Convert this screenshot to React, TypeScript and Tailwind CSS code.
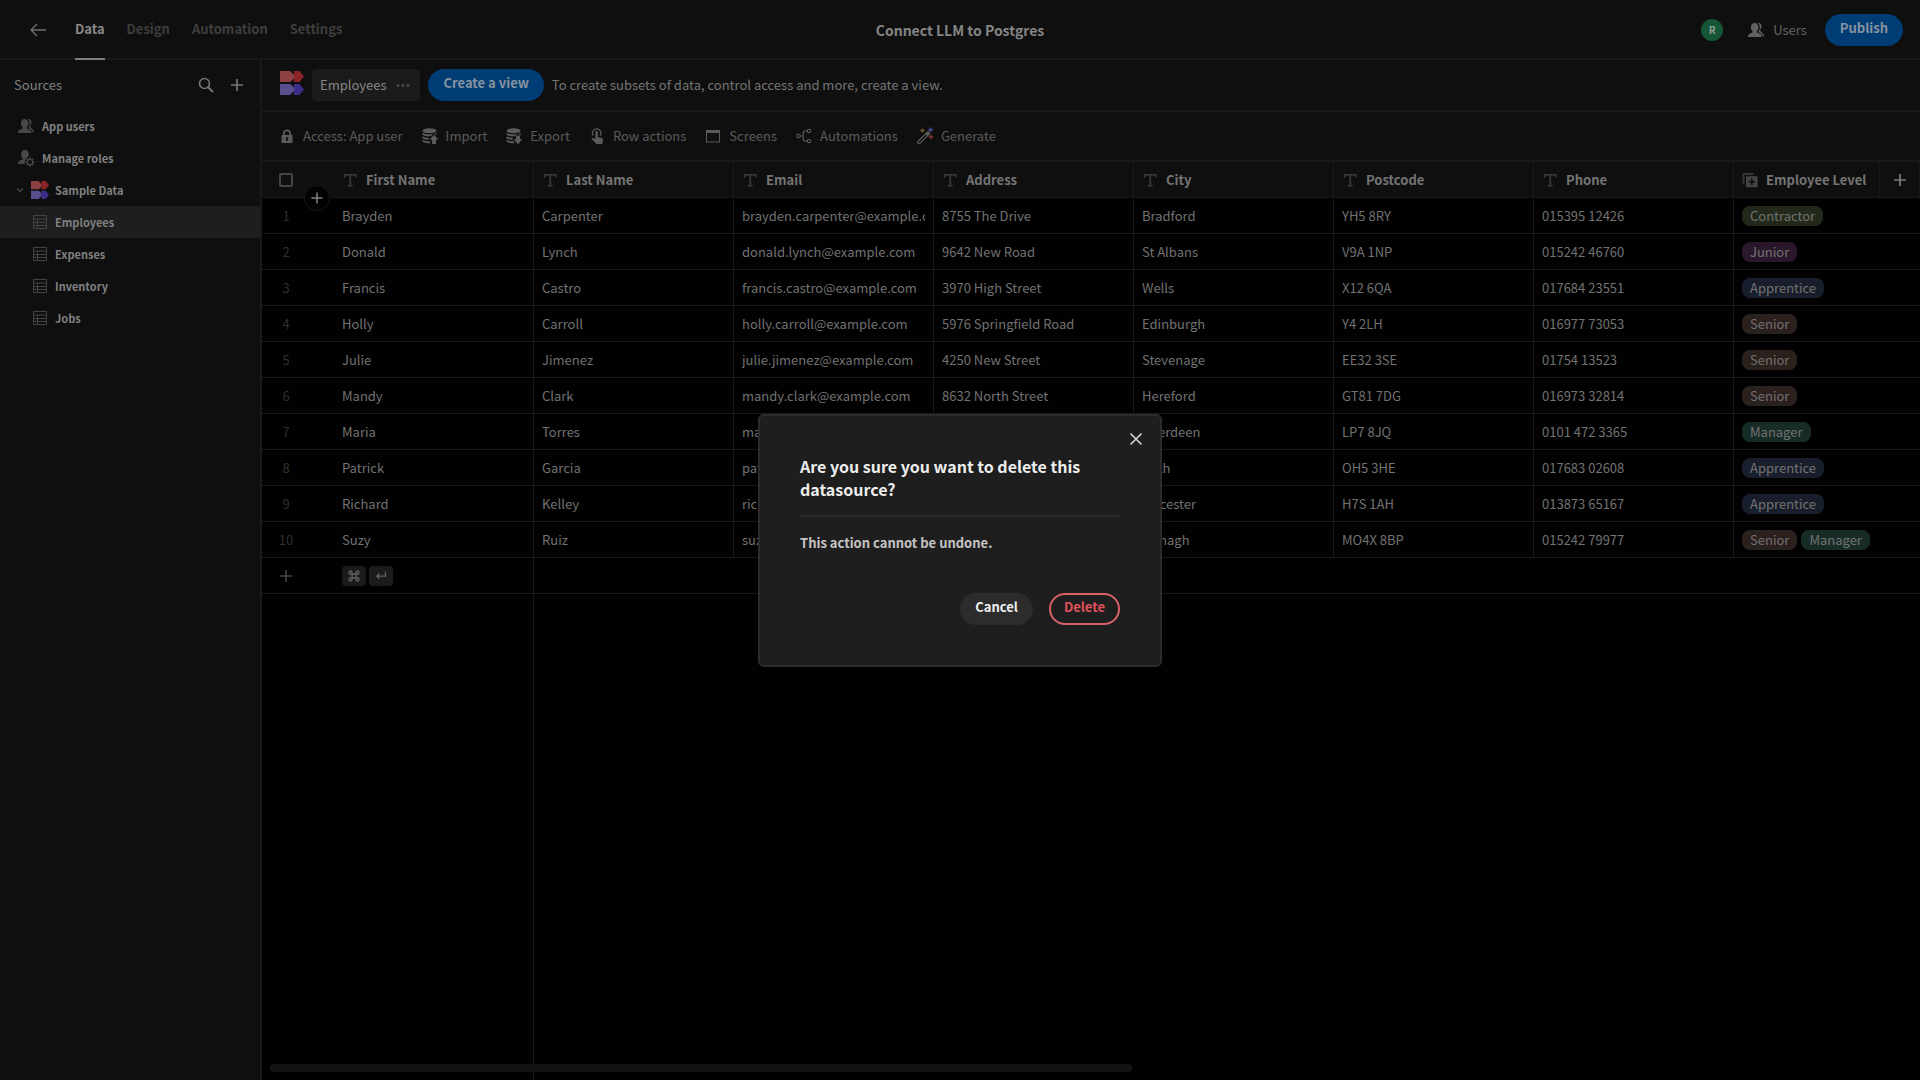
import type { ReactNode } from "react";

type IconProps = { children: ReactNode; className?: string };

function Icon({ children, className = "" }: IconProps) {
  return (
    <svg viewBox="0 0 18 18" width="18" height="18" fill="currentColor" aria-hidden="true" className={`shrink-0 ${className}`}>
      {children}
    </svg>
  );
}

const ArrowLeft = () => (
  <Icon>
    <path d="M17 9H2.500M8 3L2 9l6 6" fill="none" stroke="currentColor" strokeWidth="1.300" />
  </Icon>
);

const People = () => (
  <Icon>
    <path d="M7.600 2C10 2 11.500 3.800 11.500 6.200c0 1.600-.7 2.900-1.600 3.700v1c0 .5.300.8.8 1 2.500.7 3.900 1.700 3.900 3.300v.8H1v-.8c0-1.600 1.200-2.600 3.700-3.300.5-.2.8-.5.8-1v-1c-.9-.8-1.600-2.100-1.600-3.700C3.900 3.800 5.300 2 7.600 2z" />
    <path d="M10.500 1.700c2.300-.4 4 1.200 4 3.600 0 1.500-.6 2.700-1.400 3.500v.8l4 4.600v1h-1.500c-.2-1.700-1.700-3-4.100-3.900v-.9c.8-1 1.300-2.400 1.300-3.900 0-2.100-.8-3.800-2.300-4.800z" />
  </Icon>
);

const PersonGear = () => (
  <Icon>
    <path d="M8 1c2.300 0 3.900 1.700 3.900 4 0 1.600-.6 2.700-1.500 3.500-1.600.8-2.600 2.400-2.600 4.200 0 .8.200 1.500.5 2.300H1v-1c0-1.500 1.200-2.400 3.500-3 .5-.2.900-.5.900-1v-1C4.500 8.200 4 6.800 4 5.200 4 2.800 5.700 1 8 1z" />
    <circle cx="13" cy="13" r="2.700" fill="none" stroke="currentColor" strokeWidth="1.300" />
    <path d="M13 8.300v1.600M13 16.100v1.600M8.300 13h1.600M16.100 13h1.600M9.700 9.700l1.100 1.100M15.200 15.200l1.100 1.100M16.300 9.700l-1.100 1.100M10.800 15.200l-1.100 1.100" stroke="currentColor" strokeWidth="1.500" />
  </Icon>
);

const Search = () => (
  <Icon>
    <circle cx="7.500" cy="7.500" r="5" fill="none" stroke="currentColor" strokeWidth="1.600" />
    <path d="M11.200 11.200L15.500 15.500" stroke="currentColor" strokeWidth="2" strokeLinecap="round" />
  </Icon>
);

const Plus = ({ className = "" }: { className?: string }) => (
  <Icon className={className}>
    <path d="M9 3v12M3 9h12" stroke="currentColor" strokeWidth="1.700" />
  </Icon>
);

const Table = () => (
  <Icon>
    <path d="M2.500 2.500h13v13h-13zM2.500 6h13M2.500 9.500h13M2.500 12.500h13M6.500 6v9.500" fill="none" stroke="currentColor" />
  </Icon>
);

const Lock = () => (
  <Icon>
    <path fillRule="evenodd" d="M14 8h-1V6.500a4 4 0 0 0-8 0V8H4a.5.500 0 0 0-.5.500v7a.5.500 0 0 0 .5.500h10a.5.500 0 0 0 .5-.5v-7A.5.500 0 0 0 14 8zM6.700 6.500a2.300 2.300 0 0 1 4.600 0V8H6.700zM9.800 12.200V14H8.200v-1.800a1.200 1.200 0 1 1 1.600 0z" />
  </Icon>
);

/* Stacked data discs, shared by the import and export icons */
const Discs = () => (
  <>
    <ellipse cx="8.500" cy="3.800" rx="7" ry="2.500" />
    <path d="M1.500 5.500c1 1.300 3.800 1.900 7 1.900 1.300 0 2.600-.1 3.700-.4L9.800 9.300c-3.700.2-7.300-.5-8.300-1.900zM13.500 6.600c1-.3 1.700-.7 2-1.100v2.800zM1.500 9c1 1.300 3.500 1.900 6.700 1.900L7 12.700c-2.800-.1-5-.8-5.500-1.800zM1.500 12.500c.8 1 2.900 1.600 5.500 1.700h2v2c-3.900.1-7.500-.8-7.500-2.200z" />
  </>
);

const Import = () => (
  <Icon>
    <Discs />
    <path d="M13 7.700l4.500 5H15V17h-4v-4.300H8.500z" />
  </Icon>
);

const Export = () => (
  <Icon>
    <Discs />
    <path d="M11 8.500h4v3.800h2.500l-4.500 5-4.500-5H11z" />
  </Icon>
);

const Tap = () => (
  <Icon>
    <path d="M5.300 8.700a4.200 4.200 0 1 1 6.700 0" fill="none" stroke="currentColor" strokeWidth="1.200" />
    <path d="M7.400 5.300a1.250 1.250 0 0 1 2.500 0v5l4 .8c.8.200 1.200.7 1.100 1.500l-.5 2.800V17H7.800v-1l-4-3.700c-.9-1 .3-2 1.300-1.400l2.300 1.200z" />
  </Icon>
);

const Screen = () => (
  <Icon>
    <path fillRule="evenodd" d="M2 3h14v12.500H2zM3 6v8.500h12V6z" />
  </Icon>
);

const Branch = () => (
  <Icon>
    <g fill="none" stroke="currentColor" strokeWidth="1.100">
      <circle cx="3.500" cy="9" r="1.700" />
      <circle cx="14" cy="4" r="1.700" />
      <circle cx="14" cy="14" r="1.700" />
      <path d="M5.200 9h3M12.300 4H10.200Q8.200 4 8.200 6v6q0 2 2 2h2.100" />
    </g>
  </Icon>
);

const Wand = () => (
  <Icon>
    <path d="M3.200 15.200L12 6.400" stroke="currentColor" strokeWidth="4" strokeLinecap="round" />
    <path d="M3.200 15.200L9.800 8.600" stroke="#0f0f0f" strokeWidth="1.500" strokeLinecap="round" />
    <path d="M6.500 1.500v4M4.500 3.500h4" stroke="#75602a" strokeWidth="1.300" />
    <path d="M14.500 .5v4.500M12.300 2.700h4.500" stroke="#4b4b93" strokeWidth="1.500" />
    <path d="M15 7.500v4.500M12.800 9.700h4.500" stroke="#84302f" strokeWidth="1.500" />
  </Icon>
);

const TextType = () => (
  <Icon>
    <path d="M3 3h12.500v3.500h-1.100l-.6-2h-3.700v9.700l2 .4v1H6.400v-1l2-.4V4.500H4.700l-.6 2H3z" />
  </Icon>
);

const MultiType = () => (
  <Icon>
    <path d="M1.500 2h11v2H3.500v8.500h-2z" opacity=".7" />
    <path fillRule="evenodd" d="M5 5.200h11.500v11H5zM10 7.500v2.400H7.600v1.700H10V14h1.700v-2.400h2.400V9.900h-2.400V7.500z" />
  </Icon>
);

function Logo({ className }: { className: string }) {
  return (
    <svg viewBox="0 0 24 24" aria-hidden="true" className={`shrink-0 ${className}`}>
      <path d="M0 0h10l4 4v3.500L10.500 11H0z" fill="#8e4144" />
      <path d="M14 0h5.500L24 5.500 19.500 11H14z" fill="#8b2529" />
      <path d="M0 13h10.500l3.500 3.500V20l-4 4H0z" fill="#584f8c" />
      <path d="M14 13h5.500l4.500 5.500-4.500 5.500H14z" fill="#3b2f8b" />
    </svg>
  );
}

const columns = ["First Name", "Last Name", "Email", "Address", "City", "Postcode", "Phone"];

const employees = [
  ["Brayden", "Carpenter", "brayden.carpenter@example.com", "8755 The Drive", "Bradford", "YH5 8RY", "015395 12426", "Contractor"],
  ["Donald", "Lynch", "donald.lynch@example.com", "9642 New Road", "St Albans", "V9A 1NP", "015242 46760", "Junior"],
  ["Francis", "Castro", "francis.castro@example.com", "3970 High Street", "Wells", "X12 6QA", "017684 23551", "Apprentice"],
  ["Holly", "Carroll", "holly.carroll@example.com", "5976 Springfield Road", "Edinburgh", "Y4 2LH", "016977 73053", "Senior"],
  ["Julie", "Jimenez", "julie.jimenez@example.com", "4250 New Street", "Stevenage", "EE32 3SE", "01754 13523", "Senior"],
  ["Mandy", "Clark", "mandy.clark@example.com", "8632 North Street", "Hereford", "GT81 7DG", "016973 32814", "Senior"],
  ["Maria", "Torres", "maria.torres@example.com", "2841 Mill Lane", "Aberdeen", "LP7 8JQ", "0101 472 3365", "Manager"],
  ["Patrick", "Garcia", "patrick.garcia@example.com", "7316 Church Road", "Bath", "OH5 3HE", "017683 02608", "Apprentice"],
  ["Richard", "Kelley", "richard.kelley@example.com", "1094 Park Road", "Leicester", "H7S 1AH", "013873 65167", "Apprentice"],
  ["Suzy", "Ruiz", "suzy.ruiz@example.com", "6420 Station Road", "Armagh", "MO4X 8BP", "015242 79977", "Senior,Manager"],
];

const tagColors: Record<string, string> = {
  Contractor: "bg-[#23291a]",
  Junior: "bg-[#2a172b]",
  Apprentice: "bg-[#191e2c]",
  Senior: "bg-[#2a201c]",
  Manager: "bg-[#182c27]",
};

const tools = [
  { label: "Access: App user", icon: <Lock /> },
  { label: "Import", icon: <Import /> },
  { label: "Export", icon: <Export /> },
  { label: "Row actions", icon: <Tap /> },
  { label: "Screens", icon: <Screen /> },
  { label: "Automations", icon: <Branch /> },
  { label: "Generate", icon: <Wand /> },
];

function TopBar() {
  return (
    <header className="grid h-[60px] shrink-0 grid-cols-3 items-center border-b-2 border-[#191919] bg-[#0f0f0f]">
      <div className="flex h-[60px] items-center gap-7 pl-[29px] font-bold text-[#3e3e3e]">
        <button aria-label="Back" className="text-[#6f6f6f]"><ArrowLeft /></button>
        <nav className="flex h-full items-center gap-[22px]">
          <a href="#data" className="flex h-full items-center border-b-2 border-[#7e7e7e] text-[#8a8a8a]">Data</a>
          <a href="#design" className="pb-[2px]">Design</a>
          <a href="#automation" className="pb-[2px]">Automation</a>
          <a href="#settings" className="pb-[2px]">Settings</a>
        </nav>
      </div>
      <h1 className="text-center text-[14px] font-bold text-[#858585]">Connect LLM to Postgres</h1>
      <div className="flex items-center justify-end pr-[17px]">
        <span className="flex size-[22px] items-center justify-center rounded-full bg-[#145637] text-[10px] font-bold text-[#8f9f97]">R</span>
        <button className="ml-6 flex items-center gap-2 text-[#626262]"><People />Users</button>
        <button className="ml-[18px] h-8 rounded-full bg-[#003d74] px-[15px] pb-1 font-bold text-[#8793a0]">Publish</button>
      </div>
    </header>
  );
}

function Sidebar() {
  return (
    <aside className="flex w-[262px] shrink-0 flex-col border-r-2 border-[#191919] bg-[#0f0f0f]">
      <div className="flex h-[50px] items-center pr-[14px] pl-[14px] text-[#757575]">
        <h2 className="flex-1 text-[#808080]">Sources</h2>
        <button aria-label="Search" className="mr-[13px]"><Search /></button>
        <button aria-label="Add source"><Plus /></button>
      </div>
      <nav className="text-[11px] font-bold text-[#808080]">
        <a href="#users" className="flex h-8 items-center gap-[7px] pl-[17px]"><span className="text-[#474747]"><People /></span>App users</a>
        <a href="#roles" className="flex h-8 items-center gap-[7px] pl-[17px]"><span className="text-[#474747]"><PersonGear /></span>Manage roles</a>
        <a href="#sample" className="flex h-8 items-center gap-[6px] pl-4">
          <svg viewBox="0 0 8 8" width="8" height="8" aria-hidden="true" className="mr-[1px]">
            <path d="M1 2.500l3 3 3-3" fill="none" stroke="#4c4c4c" strokeWidth="1.200" />
          </svg>
          <Logo className="size-[18px]" />
          Sample Data
        </a>
        {["Employees", "Expenses", "Inventory", "Jobs"].map((name) => (
          <a key={name} href={`#${name}`} className={`flex h-8 items-center gap-[6px] pl-[31px] ${name === "Employees" ? "bg-[#1e1e1e]" : ""}`}>
            <span className="text-[#434343]"><Table /></span>
            {name}
          </a>
        ))}
      </nav>
    </aside>
  );
}

function DataGrid() {
  const line = "border-[#191919]";
  return (
    <div className="relative flex flex-1 flex-col bg-[#010101]">
      <table className="w-full table-fixed border-separate border-spacing-0 text-left text-[#727272]">
        <colgroup>
          <col className="w-[72px]" />
          {columns.map((c) => <col key={c} className="w-[200px]" />)}
          <col />
          <col className="w-10" />
        </colgroup>
        <thead className="bg-[#0f0f0f]">
          <tr className="h-9">
            <th className={`border-b ${line} p-0 pl-[17px]`}>
              <input type="checkbox" aria-label="Select all rows" className="block size-[14px] appearance-none rounded-[2px] border-2 border-[#444444]" />
            </th>
            {columns.map((c) => (
              <th key={c} className={`border-r border-b ${line} p-0 pl-[7px] font-bold text-[#747474]`}>
                <span className="flex items-center gap-[7px]"><span className="text-[#3c3c3c]"><TextType /></span>{c}</span>
              </th>
            ))}
            <th className={`border-r border-b ${line} p-0 pl-[7px] font-bold text-[#747474]`}>
              <span className="flex items-center gap-[7px] whitespace-nowrap"><span className="text-[#444444]"><MultiType /></span>Employee Level</span>
            </th>
            <th className={`border-r border-b ${line} p-0`}>
              <button aria-label="Add column" className="flex w-full justify-center text-[#7c7c7c]"><Plus /></button>
            </th>
          </tr>
        </thead>
        <tbody>
          {employees.map((row, i) => (
            <tr key={row[0]} className="h-9">
              <td className={`border-b ${line} p-0 pr-6 text-center text-[#303030]`}>{i + 1}</td>
              {row.slice(0, 7).map((cell) => (
                <td key={cell} className={`border-r border-b ${line} px-2 py-0`}>
                  <div className="overflow-hidden whitespace-nowrap">{cell}</div>
                </td>
              ))}
              <td colSpan={2} className={`border-b ${line} px-2 py-0`}>
                <div className="flex gap-1">
                  {row[7].split(",").map((tag) => (
                    <span key={tag} className={`flex h-5 items-center rounded-lg px-2 ${tagColors[tag]}`}>{tag}</span>
                  ))}
                </div>
              </td>
            </tr>
          ))}
          <tr className="h-9">
            <td className={`border-b ${line} p-0 pl-[15px]`}>
              <button aria-label="Add row" className="block text-[#444444]"><Plus /></button>
            </td>
            <td className={`border-r border-b ${line} px-2 py-0`}>
              <div className="flex gap-[3px]">
                <kbd className="flex h-5 w-6 items-center justify-center rounded bg-[#1b1b1b] text-[#636363]">
                  <svg viewBox="0 0 12 12" width="12" height="12" fill="none" stroke="currentColor" strokeWidth="1.300" aria-hidden="true">
                    <path d="M4 4h4v4H4zM4 4H2.500A1.500 1.500 0 1 1 4 2.500zM8 4V2.500A1.500 1.500 0 1 1 9.500 4zM8 8h1.500A1.500 1.500 0 1 1 8 9.500zM4 8v1.500A1.500 1.500 0 1 1 2.500 8z" />
                  </svg>
                </kbd>
                <kbd className="flex h-5 w-6 items-center justify-center rounded bg-[#1b1b1b] text-[#636363]">
                  <svg viewBox="0 0 12 12" width="12" height="12" fill="none" stroke="currentColor" strokeWidth="1.300" aria-hidden="true">
                    <path d="M10.500 1.500v4.700H2M4.500 3.500L1.800 6.200l2.700 2.700" />
                  </svg>
                </kbd>
              </div>
            </td>
            <td colSpan={8} className={`border-b ${line}`} />
          </tr>
        </tbody>
      </table>
      <div className={`w-[272px] flex-1 border-r ${line}`} />
      <button aria-label="Insert row" className="absolute top-[23px] left-[42px] flex size-[26px] items-center justify-center rounded-full border border-[#171717] bg-[#020202] text-[#828282]">
        <svg viewBox="0 0 12 12" width="12" height="12" stroke="currentColor" strokeWidth="1.500" aria-hidden="true"><path d="M6 .5v11M.5 6h11" /></svg>
      </button>
      <div className="absolute bottom-2 left-2 h-2 w-[52%] rounded bg-[#131313]" />
    </div>
  );
}

function DeleteDialog() {
  return (
    <div className="fixed inset-0 flex items-center justify-center">
      <div role="dialog" aria-labelledby="dialog-title" className="relative w-[404px] rounded-md border-2 border-[#2c2c2c] bg-[#1e1e1e] px-10 pt-[39px] pb-10">
        <button aria-label="Close" className="absolute top-[14px] right-[15px] text-[#cfcfcf]">
          <Icon><path d="M3.500 3.500l11 11M14.500 3.500l-11 11" stroke="currentColor" strokeWidth="1.700" /></Icon>
        </button>
        <h2 id="dialog-title" className="border-b-2 border-[#2c2c2c] pb-[14px] text-[16px] leading-[23px] font-bold text-[#ededed]">
          Are you sure you want to delete this datasource?
        </h2>
        <p className="mt-4 leading-5 font-bold text-[#c4c4c4]">This action cannot be undone.</p>
        <div className="mt-10 flex justify-end gap-4 font-bold">
          <button className="h-8 rounded-full bg-[#2c2c2c] px-[15px] pb-1 text-[#efefef]">Cancel</button>
          <button className="h-8 rounded-full border-2 border-[#d8616a] px-[13px] pb-1 text-[#e0515c]">Delete</button>
        </div>
      </div>
    </div>
  );
}

export default function App() {
  return (
    <div className="flex min-h-screen flex-col bg-[#010101] font-['Noto_Sans_CJK_SC',sans-serif] text-[13px] leading-5">
      <TopBar />
      <div className="flex flex-1">
        <Sidebar />
        <main className="flex min-w-0 flex-1 flex-col bg-[#0f0f0f]">
          <div className="flex h-[52px] shrink-0 items-center gap-2 border-b-2 border-[#191919] pl-[18px] text-[#757575]">
            <Logo className="mb-1 size-6" />
            <button className="flex h-8 items-center gap-2 rounded bg-[#1b1b1b] px-2 text-[#858585]">
              Employees
              <svg viewBox="0 0 14 4" width="18" height="5" fill="#4a4a4a" aria-hidden="true"><circle cx="3" cy="2" r="1.200" /><circle cx="7" cy="2" r="1.200" /><circle cx="11" cy="2" r="1.200" /></svg>
            </button>
            <button className="h-8 rounded-full bg-[#003d74] px-[15px] pb-1 font-bold text-[#8793a0]">Create a view</button>
            <p>To create subsets of data, control access and more, create a view.</p>
          </div>
          <div className="flex h-[50px] shrink-0 items-center gap-[18px] border-b-2 border-[#191919] pl-4 text-[#5b5b5b]">
            {tools.map((t) => (
              <button key={t.label} className="flex items-center gap-[7px]">{t.icon}{t.label}</button>
            ))}
          </div>
          <DataGrid />
        </main>
      </div>
      <DeleteDialog />
    </div>
  );
}
